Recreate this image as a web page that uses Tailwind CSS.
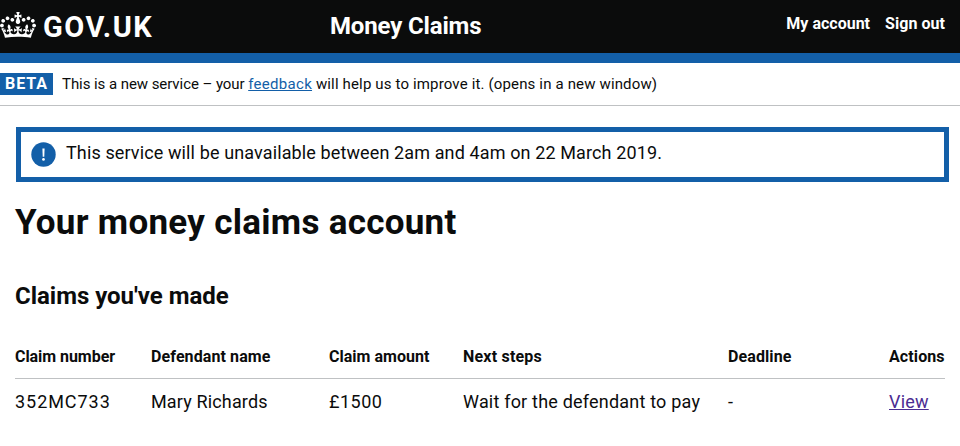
<!DOCTYPE html>
<html lang="en">
<head>
<meta charset="utf-8">
<title>Your money claims account</title>
<script src="https://cdn.jsdelivr.net/npm/@tailwindcss/browser@4"></script>
</head>
<body class="bg-white font-[Roboto,sans-serif] text-[#0b0c0c] h-[446px] overflow-hidden whitespace-nowrap">
<header class="flex h-[63px] items-start border-b-[10px] border-[#135fa8] bg-[#0b0c0c] font-bold text-white">
  <a class="flex w-[330px] items-start pt-[11px]">
    <svg class="mt-[1px] h-[26px] w-[36px] shrink-0" viewBox="0 0 132 97" preserveAspectRatio="none" fill="currentColor"><path d="M25 30.2c3.5 1.5 7.7-.2 9.1-3.7 1.5-3.6-.2-7.8-3.9-9.2-3.6-1.4-7.6.3-9.1 3.9-1.4 3.5.3 7.5 3.9 9zM9 39.5c3.6 1.5 7.8-.2 9.2-3.7 1.5-3.6-.2-7.8-3.9-9.1-3.6-1.5-7.6.2-9.1 3.8-1.4 3.5.3 7.5 3.8 9zM4.4 57.2c3.5 1.5 7.7-.2 9.1-3.8 1.5-3.6-.2-7.7-3.9-9.1-3.5-1.5-7.6.3-9.1 3.8-1.4 3.5.3 7.6 3.9 9.1zm38.3-21.4c3.5 1.5 7.7-.2 9.1-3.8 1.5-3.6-.2-7.7-3.9-9.1-3.6-1.5-7.6.3-9.1 3.8-1.3 3.6.4 7.7 3.9 9.1zm64.4-5.6c-3.6 1.5-7.8-.2-9.1-3.7-1.5-3.6.2-7.8 3.8-9.2 3.6-1.4 7.7.3 9.2 3.9 1.3 3.5-.4 7.5-3.9 9zm15.9 9.3c-3.6 1.5-7.7-.2-9.1-3.7-1.5-3.6.2-7.8 3.7-9.1 3.6-1.5 7.7.2 9.2 3.8 1.5 3.5-.3 7.5-3.8 9zm4.7 17.7c-3.6 1.5-7.8-.2-9.2-3.8-1.5-3.6.2-7.7 3.9-9.1 3.6-1.5 7.7.3 9.2 3.8 1.3 3.5-.4 7.6-3.9 9.1zM89.3 35.8c-3.6 1.5-7.8-.2-9.2-3.8-1.4-3.6.2-7.7 3.9-9.1 3.6-1.5 7.7.3 9.2 3.8 1.4 3.6-.3 7.7-3.9 9.1zM69.7 17.7l8.9 4.7V9.3l-8.9 2.8c-.2-.3-.5-.6-.9-.9L72.4 0H59.6l3.5 11.2c-.3.3-.6.5-.9.9l-8.8-2.8v13.1l8.8-4.7c.3.3.6.7.9.9l-5 15.4v.1c-.2.8-.4 1.6-.4 2.4 0 4.1 3.1 7.5 7 8.1h.2c.3 0 .7.1 1 .1.4 0 .7 0 1-.1h.2c4-.6 7.1-4.1 7.1-8.1 0-.8-.1-1.7-.4-2.4V34l-5.1-15.4c.4-.2.7-.6 1-.9zM66 92.8c16.9 0 32.8 1.1 47.1 3.2 4-16.9 8.9-26.7 14-33.5l-9.6-3.4c1 4.9 1.1 7.2 0 10.2-1.5-1.4-3-4.3-4.2-8.7L108.6 76c2.8-2 5-3.2 7.5-3.3-4.4 9.4-10 11.9-13.6 11.2-4.3-.8-6.3-4.6-5.6-7.9 1-4.7 5.7-5.9 8-.5 4.3-8.7-3-11.4-7.6-8.8 7.1-7.2 7.9-13.5 2.1-21.1-8 6.1-8.1 12.3-4.5 20.8-4.7-5.4-12.1-2.5-9.5 6.2 3.4-5.2 7.9-2 7.2 3.1-.6 4.3-6.4 7.8-13.5 7.2-10.3-.9-10.9-8-11.2-13.8 2.5-.5 7.1 1.8 11 7.3L80.2 60c-4.1 4.4-8 5.3-12.3 5.4 1.4-4.4 8-11.6 8-11.6H55.5s6.4 7.2 7.9 11.6c-4.2-.1-8-1-12.3-5.4l1.4 16.4c3.9-5.5 8.5-7.7 10.9-7.3-.3 5.8-.9 12.8-11.1 13.8-7.2.6-12.9-2.9-13.5-7.2-.7-5 3.8-8.3 7.1-3.1 2.7-8.7-4.6-11.6-9.4-6.2 3.7-8.5 3.6-14.7-4.6-20.8-5.8 7.6-5 13.9 2.2 21.1-4.7-2.6-11.9.1-7.7 8.8 2.3-5.5 7.1-4.2 8.1.5.7 3.3-1.3 7.1-5.7 7.9-3.5.7-9-1.8-13.5-11.2 2.5.1 4.7 1.3 7.5 3.3l-4.7-15.4c-1.2 4.4-2.7 7.2-4.3 8.7-1.1-3-.9-5.3 0-10.2l-9.5 3.4c5 6.9 9.9 16.7 14 33.5 14.8-2.1 30.8-3.2 47.7-3.2z"/></svg>
    <span class="ml-[7px] text-[29px] leading-8 tracking-[1.5px]">GOV.UK</span>
  </a>
  <a class="pt-[10px] text-2xl leading-8 tracking-[-0.15px]">Money Claims</a>
  <nav class="ml-auto flex gap-[15px] pr-[15px] pt-3 text-base leading-6">
    <a>My account</a>
    <a class="tracking-[0.05px]">Sign out</a>
  </nav>
</header>

<div class="flex h-[43px] items-start border-b border-[#bfc1c3] pt-[10px]">
  <strong class="h-[22px] w-[53px] bg-[#135fa8] pl-[5px] text-base leading-[21px] tracking-[0.95px] text-white">BETA</strong>
  <p class="ml-[9px] text-[15px] leading-[22px] tracking-[0.15px]"><span class="tracking-[-0.065px]">This is a new service – your </span><a class="tracking-[0.3px] text-[#135fa8] underline">feedback</a> will help us to improve it. (opens in a new window)</p>
</div>

<main class="px-[15px] pt-[21px]">
  <div class="-mr-1 ml-px flex h-[55px] items-start border-5 border-[#135fa8] pl-[10px] pt-[9px]">
    <svg class="mt-px size-[25px]" viewBox="0 0 25 25"><circle cx="12.5" cy="12.5" r="12.2" fill="#135fa8"/><path d="M11.4 6.4h2.2l-.3 8.3h-1.6z" fill="white"/><circle cx="12.5" cy="17.4" r="1.35" fill="white"/></svg>
    <p class="ml-[10px] text-lg leading-6 tracking-[0.12px]">This service will be unavailable between 2am and 4am on 22 March 2019.</p>
  </div>
  <h1 class="mt-[21px] text-[35px] font-bold leading-10 tracking-[0.28px]">Your money claims account</h1>
  <h2 class="mt-[37px] text-2xl font-bold leading-8 tracking-[-0.02px]">Claims you've made</h2>

  <div class="mt-[33px] grid grid-cols-[136px_178px_134px_265px_161px_56px] border-b border-[#bfc1c3] pb-[9px] text-base font-bold leading-6 tracking-[0.1px]">
    <span class="tracking-[-0.05px]">Claim number</span><span>Defendant name</span><span class="tracking-[0.02px]">Claim amount</span><span class="tracking-[0.2px]">Next steps</span><span>Deadline</span><span>Actions</span>
  </div>
  <div class="grid grid-cols-[136px_178px_134px_265px_161px_56px] pt-[11px] text-lg leading-6 tracking-[0.2px]">
    <span class="tracking-[0.95px]">352MC733</span><span class="tracking-[0.15px]">Mary Richards</span><span class="tracking-[0.5px]">£1500</span><span>Wait for the defendant to pay</span><span>-</span><a class="text-[#4c2c92] underline">View</a>
  </div>
</main>
</body>
</html>
